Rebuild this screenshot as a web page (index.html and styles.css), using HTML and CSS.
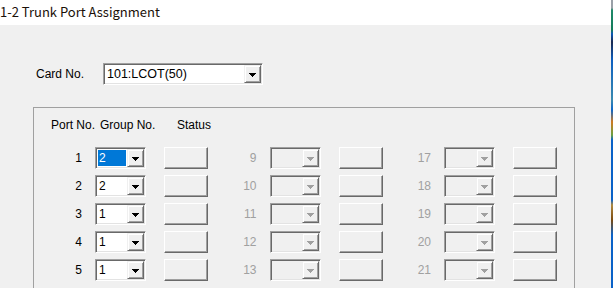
FILE: index.html
```html
<!DOCTYPE html>
<html lang="en">
<head>
    <meta charset="UTF-8" />
    <title>1-2 Trunk Port Assignment</title>
    <link rel="stylesheet" href="styles.css">
</head>
<body>

<div class="window">
    <div class="titlebar">1-2 Trunk Port Assignment</div>

    <div class="dialog">
        <!-- Card selector -->
        <div class="card-row">
            <span class="card-label">Card No.</span>
            <div class="combo combo-wide">
                <span class="field">101:LCOT(50)</span>
                <span class="drop"></span>
            </div>
        </div>

        <!-- Port / group table -->
        <div class="group">
            <div class="head">
                <span class="head-port">Port No.</span>
                <span class="head-group">Group No.</span>
                <span class="head-status">Status</span>
            </div>
            <div class="ports" id="ports"></div>
        </div>
    </div>
</div>

<div class="strip"></div>

<script>
    let groups = ["2", "2", "1", "1", "1"];
    let rows = 5;
    let perColumn = 8;
    let html = "";

    for (let r = 0; r < rows; r++) {
        for (let c = 0; c < 3; c++) {
            let port = c * perColumn + r + 1;
            let enabled = c === 0;
            let value = enabled ? groups[r] : "";
            let valueClass = enabled && r === 0 ? "value selected" : "value";
            html += `
            <div class="port${enabled ? "" : " disabled"}">
                <span class="port-no">${port}</span>
                <div class="combo">
                    <span class="field"><span class="${valueClass}">${value}</span></span>
                    <span class="drop"></span>
                </div>
                <span class="status"></span>
            </div>`;
        }
    }

    document.getElementById('ports').innerHTML = html;
</script>

</body>
</html>
```

FILE: styles.css
```css
html, body {
    margin: 0;
    height: 100%;
    overflow: hidden;
}
body {
    display: flex;
    font-family: "Liberation Sans", Arial, sans-serif;
    font-size: 12px;
    color: #000;
    background-color: #f0f0f0;
}
.window {
    flex: 1;
}
.titlebar {
    height: 25px;
    line-height: 24px;
    background-color: #fff;
    font-family: "Noto Sans CJK SC", "Noto Sans", sans-serif;
    font-size: 13px;
    color: #1a1008;
    white-space: nowrap;
}
.dialog {
    padding: 38px 0 0 33px;
}
.card-row {
    display: flex;
    align-items: center;
    padding-left: 3px;
}
.card-label {
    width: 67px;
}
.combo {
    display: flex;
    width: 51px;
    height: 22px;
    box-sizing: border-box;
    padding: 1px;
    border: 1px solid;
    border-color: #a0a0a0 #fff #fff #a0a0a0;
    box-shadow: inset 1px 1px #696969, inset -1px -1px #e3e3e3;
    background-color: #fff;
}
.combo-wide {
    width: 160px;
}
.field {
    flex: 1;
    display: flex;
    padding: 1px;
    line-height: 16px;
    background-color: #fff;
    white-space: nowrap;
}
.combo-wide .field {
    padding-left: 2px;
    font-size: 12.5px;
}
.value {
    flex: 1;
    padding-left: 1px;
}
.value.selected {
    background-color: #0078d7;
    color: #fff;
}
.drop {
    width: 17px;
    box-sizing: border-box;
    border: 1px solid;
    border-color: #f0f0f0 #696969 #696969 #f0f0f0;
    box-shadow: inset 1px 1px #fff, inset -1px -1px #a0a0a0;
    background-color: #f0f0f0;
    display: flex;
    align-items: center;
    justify-content: center;
}
.drop::after {
    content: "";
    width: 7px;
    height: 4px;
    margin-top: 1px;
    --tri: #000;
    background:
        linear-gradient(var(--tri), var(--tri)) 0 0 / 7px 1px no-repeat,
        linear-gradient(var(--tri), var(--tri)) 1px 1px / 5px 1px no-repeat,
        linear-gradient(var(--tri), var(--tri)) 2px 2px / 3px 1px no-repeat,
        linear-gradient(var(--tri), var(--tri)) 3px 3px / 1px 1px no-repeat;
}
.group {
    width: 542px;
    height: 200px;
    box-sizing: border-box;
    margin-top: 22px;
    border: 1px solid #a0a0a0;
    padding: 10px 0 0 0;
}
.head {
    display: flex;
    line-height: 14px;
    white-space: nowrap;
}
.head-port {
    margin-left: 17px;
    width: 49px;
}
.head-group {
    width: 77px;
}
.ports {
    display: grid;
    grid-template-columns: repeat(3, 174.5px);
    row-gap: 6px;
    margin-top: 15px;
    padding-left: 13px;
}
.port {
    display: flex;
    align-items: center;
    height: 22px;
}
.port-no {
    width: 35px;
    padding-right: 13px;
    text-align: right;
}
.status {
    width: 44px;
    height: 22px;
    box-sizing: border-box;
    margin-left: 18px;
    border: 1px solid;
    border-color: #fff #696969 #696969 #fff;
    box-shadow: inset -1px -1px #a0a0a0;
    background-color: #f0f0f0;
}
.disabled .port-no {
    color: #a0a0a0;
}
.disabled .field {
    background-color: #f0f0f0;
}
.disabled .combo {
    background-color: #f0f0f0;
}
.disabled .drop::after {
    --tri: #a0a0a0;
}
.strip {
    width: 2px;
    background: linear-gradient(#9aa0a8 0, #9aa0a8 8px, #1f8a6a 10px, #137a5a 30px, #0b58b8 34px,
        #1a2a50 42px, #0d5fc0 60px, #3a8ab0 100px, #0e66c8 110px, #d07a20 122px, #6aa040 135px,
        #0a62c8 140px, #0a62c8 200px, #b08a40 205px, #7a4a10 220px, #0a62c8 235px, #0a62c8 288px);
}
```
